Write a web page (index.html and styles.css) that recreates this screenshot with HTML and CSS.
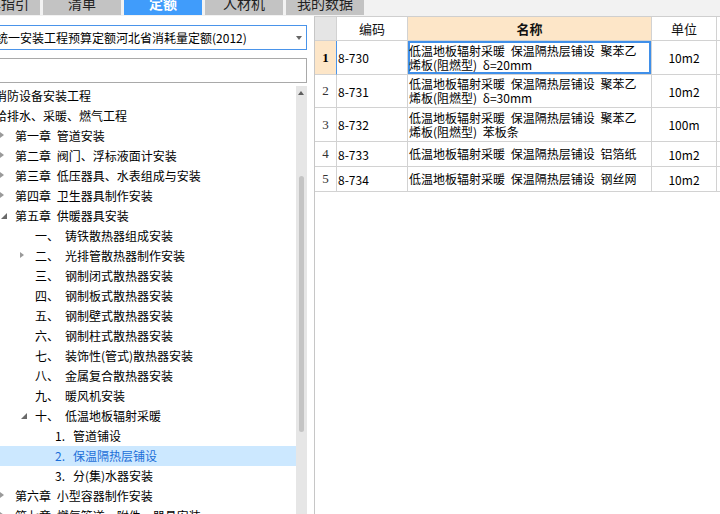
FILE: index.html
```html
<!DOCTYPE html>
<html lang="zh-CN">
<head>
<meta charset="utf-8">
<title>定额</title>
<link rel="stylesheet" href="styles.css">
</head>
<body>
<div class="app">
  <div class="tabs">
    <div class="tab first">清单指引</div>
    <div class="tab">清单</div>
    <div class="tab active">定额</div>
    <div class="tab">人材机</div>
    <div class="tab">我的数据</div>
  </div>
  <div class="main">
    <div class="left">
      <div class="combo">
        <span class="combo-text">全国统一安装工程预算定额河北省消耗量定额(2012)</span>
        <span class="caret"></span>
      </div>
      <div class="search"></div>
      <div class="tree-wrap">
        <div class="tree">
          <div class="row l0"><span class="arr"></span><span class="txt">消防设备安装工程</span></div>
          <div class="row l0"><span class="arr"></span><span class="txt">给排水、采暖、燃气工程</span></div>
          <div class="row l1"><span class="arr closed"></span><span class="txt">第一章 管道安装</span></div>
          <div class="row l1"><span class="arr closed"></span><span class="txt">第二章 阀门、浮标液面计安装</span></div>
          <div class="row l1"><span class="arr closed"></span><span class="txt">第三章 低压器具、水表组成与安装</span></div>
          <div class="row l1"><span class="arr closed"></span><span class="txt">第四章 卫生器具制作安装</span></div>
          <div class="row l1"><span class="arr open"></span><span class="txt">第五章 供暖器具安装</span></div>
          <div class="row l2"><span class="arr"></span><span class="num">一、</span><span class="txt">铸铁散热器组成安装</span></div>
          <div class="row l2"><span class="arr closed"></span><span class="num">二、</span><span class="txt">光排管散热器制作安装</span></div>
          <div class="row l2"><span class="arr"></span><span class="num">三、</span><span class="txt">钢制闭式散热器安装</span></div>
          <div class="row l2"><span class="arr"></span><span class="num">四、</span><span class="txt">钢制板式散热器安装</span></div>
          <div class="row l2"><span class="arr"></span><span class="num">五、</span><span class="txt">钢制壁式散热器安装</span></div>
          <div class="row l2"><span class="arr"></span><span class="num">六、</span><span class="txt">钢制柱式散热器安装</span></div>
          <div class="row l2"><span class="arr"></span><span class="num">七、</span><span class="txt">装饰性(管式)散热器安装</span></div>
          <div class="row l2"><span class="arr"></span><span class="num">八、</span><span class="txt">金属复合散热器安装</span></div>
          <div class="row l2"><span class="arr"></span><span class="num">九、</span><span class="txt">暖风机安装</span></div>
          <div class="row l2"><span class="arr open"></span><span class="num">十、</span><span class="txt">低温地板辐射采暖</span></div>
          <div class="row l3"><span class="arr"></span><span class="num n3">1.</span><span class="txt">管道铺设</span></div>
          <div class="row l3 sel"><span class="arr"></span><span class="num n3">2.</span><span class="txt">保温隔热层铺设</span></div>
          <div class="row l3"><span class="arr"></span><span class="num n3">3.</span><span class="txt">分(集)水器安装</span></div>
          <div class="row l1"><span class="arr closed"></span><span class="txt">第六章 小型容器制作安装</span></div>
          <div class="row l1"><span class="arr closed"></span><span class="txt">第七章 燃气管道、附件、器具安装</span></div>
        </div>
        <div class="vscroll">
          <div class="up"></div>
          <div class="thumb"></div>
        </div>
      </div>
    </div>
    <div class="right">
      <div class="grid">
        <div class="c hnum"></div>
        <div class="c head">编码</div>
        <div class="c head hname">名称</div>
        <div class="c head">单位</div>
        <div class="c head"></div>

        <div class="c rn cur">1</div>
        <div class="c code">8-730</div>
        <div class="c name focus"><span class="ln">低温地板辐射采暖 保温隔热层铺设 聚苯乙</span><span class="ln">烯板(阻燃型) δ=20mm</span></div>
        <div class="c unit">10m2</div>
        <div class="c"></div>

        <div class="c rn">2</div>
        <div class="c code">8-731</div>
        <div class="c name"><span class="ln">低温地板辐射采暖 保温隔热层铺设 聚苯乙</span><span class="ln">烯板(阻燃型) δ=30mm</span></div>
        <div class="c unit">10m2</div>
        <div class="c"></div>

        <div class="c rn">3</div>
        <div class="c code">8-732</div>
        <div class="c name"><span class="ln">低温地板辐射采暖 保温隔热层铺设 聚苯乙</span><span class="ln">烯板(阻燃型) 苯板条</span></div>
        <div class="c unit">100m</div>
        <div class="c"></div>

        <div class="c rn">4</div>
        <div class="c code">8-733</div>
        <div class="c name"><span class="ln">低温地板辐射采暖 保温隔热层铺设 铝箔纸</span></div>
        <div class="c unit">10m2</div>
        <div class="c"></div>

        <div class="c rn">5</div>
        <div class="c code">8-734</div>
        <div class="c name"><span class="ln">低温地板辐射采暖 保温隔热层铺设 钢丝网</span></div>
        <div class="c unit">10m2</div>
        <div class="c"></div>
      </div>
    </div>
  </div>
</div>
</body>
</html>
```
FILE: styles.css
```css
* { box-sizing: border-box; }
html, body { margin: 0; padding: 0; }
body {
  width: 720px;
  height: 514px;
  overflow: hidden;
  background: #fff;
  font-family: "Noto Sans CJK SC", "Noto Sans", sans-serif;
  font-size: 12px;
  color: #000;
  word-spacing: 3px;
}
.app {
  display: flex;
  flex-direction: column;
  height: 514px;
}

/* tabs */
.tabs {
  display: flex;
  height: 16px;
  gap: 3px;
  background: #f2f2f2;
  overflow: hidden;
  flex: none;
}
.tab {
  width: 78px;
  height: 15px;
  flex: none;
  background: #c3c3c3;
  color: #222;
  font-size: 14px;
  line-height: 7px;
  text-align: center;
  overflow: hidden;
  word-spacing: 0;
}
.tab.first { margin-left: -38px; }
.tab.active {
  background: #409cfb;
  color: #fff;
  font-weight: bold;
}

.main {
  flex: 1;
  display: flex;
  min-height: 0;
}

/* left panel */
.left {
  width: 314px;
  flex: none;
  display: flex;
  flex-direction: column;
  overflow: hidden;
  background: #fff;
}
.combo {
  margin: 9px 7px 0 -34px;
  height: 25px;
  border: 1px solid #4a94ea;
  display: flex;
  align-items: center;
  padding-left: 5px;
  flex: none;
  position: relative;
}
.combo-text { white-space: nowrap; word-spacing: 0; }
.caret {
  position: absolute;
  right: 4px;
  top: 10px;
  width: 0;
  height: 0;
  border-left: 3px solid transparent;
  border-right: 3px solid transparent;
  border-top: 4px solid #666;
}
.search {
  margin: 8px 7px 0 -10px;
  height: 25px;
  border: 1px solid #a9a9a9;
  flex: none;
}
.tree-wrap {
  margin-top: 3px;
  flex: 1;
  display: flex;
  min-height: 0;
  padding-right: 7px;
}
.tree {
  flex: 1;
  overflow: hidden;
  min-width: 0;
}
.row {
  height: 20px;
  line-height: 20px;
  display: flex;
  align-items: center;
  white-space: nowrap;
}
.row.l0 { margin-left: -20px; }
.row.l1 { padding-left: 0; }
.row.l2 { padding-left: 20px; }
.row.l3 { padding-left: 40px; }
.row.sel { background: #cce8ff; color: #1c6fd8; }
.arr {
  width: 15px;
  height: 20px;
  flex: none;
  position: relative;
}
.arr.closed::before {
  content: "";
  position: absolute;
  left: 0;
  top: 6px;
  border-top: 3.5px solid transparent;
  border-bottom: 3.5px solid transparent;
  border-left: 4px solid #9a9a9a;
}
.arr.open::before {
  content: "";
  position: absolute;
  left: 1px;
  top: 7px;
  border-left: 6px solid transparent;
  border-bottom: 6px solid #6a6a6a;
}
.num { width: 30px; flex: none; }
.num.n3 { width: 18px; }

.vscroll {
  width: 11px;
  flex: none;
  background: #e6e6e6;
  position: relative;
}
.up {
  position: absolute;
  left: 2px;
  top: 5px;
  border-left: 3.5px solid transparent;
  border-right: 3.5px solid transparent;
  border-bottom: 4px solid #5f5f5f;
}
.thumb {
  position: absolute;
  left: 3px;
  width: 5px;
  top: 90px;
  height: 256px;
  background: #c4c4c4;
  border-radius: 3px;
}

/* right pane */
.right {
  flex: 1;
  border-left: 1px solid #c6c6c6;
  border-top: 1px solid #cfcfcf;
  overflow: hidden;
  background: #fff;
}
.grid {
  display: grid;
  grid-template-columns: 22px 71px 244px 65px 40px;
  grid-template-rows: 24px 34px 33px 34px 25px 25px;
  width: 442px;
}
.c {
  border-right: 1px solid #d2d2d2;
  border-bottom: 1px solid #d2d2d2;
  display: flex;
  align-items: center;
  white-space: nowrap;
  overflow: hidden;
}
.hnum { background: #e5e5e5; }
.head {
  justify-content: center;
  font-size: 13px;
  color: #111;
}
.hname { background: #fde6c8; font-weight: bold; }
.rn {
  justify-content: center;
  color: #333;
  font-family: "Liberation Serif", "Noto Sans CJK SC", serif;
  font-size: 13px;
}
.rn.cur {
  background: #fde6c8;
  font-weight: bold;
  color: #000;
  border-right-color: #4a94ea;
}
.code { padding-left: 1px; word-spacing: 0; }
.name {
  padding-left: 1px;
  flex-direction: column;
  align-items: flex-start;
  justify-content: center;
  font-size: 12px;
}
.ln {
  display: block;
  height: 14px;
  line-height: 14px;
}
.name.focus { box-shadow: inset 0 0 0 2px #3f8fe9; }
.unit { justify-content: center; word-spacing: 0; }
```
